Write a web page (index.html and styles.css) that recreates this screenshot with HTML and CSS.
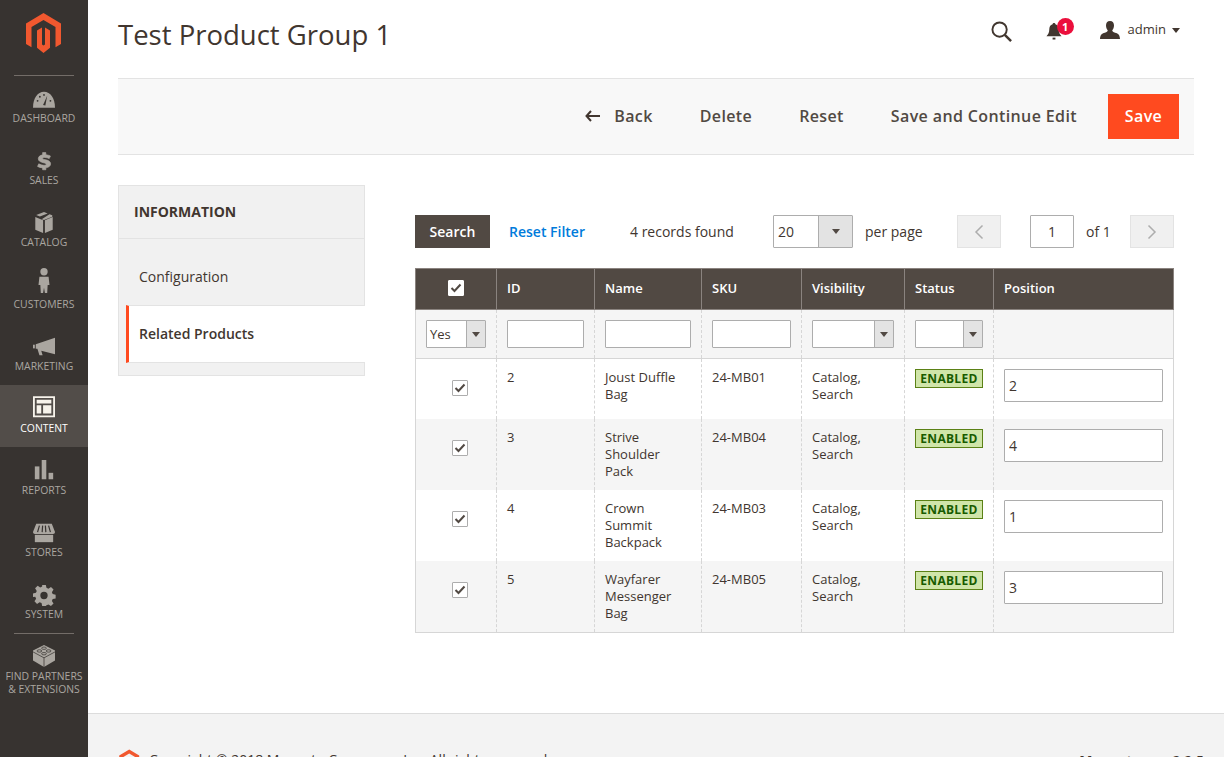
FILE: index.html
```html
<!DOCTYPE html>
<html lang="en">
<head>
    <meta charset="UTF-8">
    <meta name="viewport" content="width=device-width, initial-scale=1.0">
    <title>Test Product Group 1 / Admin</title>
    <link rel="stylesheet" href="styles.css">
</head>
<body>
<div class="page">

    <nav class="menu">
        <div class="menu-logo">
            <svg width="36" height="42" viewBox="27 11 36 42"><path fill="#f1582f" d="M44.5 12 62 22.500V43L56.500 46.300V26L44.500 19 32.500 26V46.300L27 43V22.500Z"/><path fill="#f1582f" d="M38 29.500 43 26.500V43.500L44.500 44.500 46 43.500V26.500L51 29.500V46.800L44.500 52 38 46.800Z"/></svg>
        </div>
        <ul class="menu-list">
            <li class="menu-item">
                <svg class="menu-icon" viewBox="0 0 24 24"><path d="M0 21.500C0 11 5 4 12 4s12 7 12 17.500Z"/><path fill="#373330" d="M11 18.500 15.500 8.500 13.500 19Z"/><g fill="#373330"><circle cx="5" cy="14" r="1"/><circle cx="7.500" cy="9.500" r="1"/><circle cx="12" cy="7.500" r="1"/><circle cx="19" cy="14" r="1"/></g></svg>
                <span>DASHBOARD</span>
            </li>
            <li class="menu-item">
                <svg class="menu-icon" viewBox="0 0 24 24"><path stroke="#aaa6a0" stroke-width=".8" transform="translate(0 2) scale(1 .85)" d="M10.500 1h3.500v2.800c2 .2 3.700.8 5 1.600l-1.300 3.300c-1.500-.9-3.200-1.500-5-1.500-1.500 0-2.200.5-2.200 1.200 0 .9 1.200 1.200 3.300 1.800 3.200.9 5.400 2.200 5.400 5.200 0 2.700-2 4.600-5.200 5.100V23h-3.500v-2.400c-2.200-.2-4.200-.9-5.500-1.900l1.300-3.300c1.600 1.100 3.600 1.900 5.600 1.900 1.700 0 2.500-.6 2.500-1.400 0-1-1.100-1.300-3.300-2-3-.9-5.300-2.100-5.300-5 0-2.600 1.900-4.500 4.700-5Z"/></svg>
                <span>SALES</span>
            </li>
            <li class="menu-item">
                <svg class="menu-icon" viewBox="0 0 24 24"><path d="M12 0l4 1.600-8.500 3.400-4-1.600ZM18 2.400l3 1.200v1.600L12 8.800 9.500 7.800ZM2.500 5.500l8.500 3.400V23l-8.500-3.600ZM21.500 5.500V19.400L13 23V8.900Z"/></svg>
                <span>CATALOG</span>
            </li>
            <li class="menu-item">
                <svg class="menu-icon" viewBox="0 0 24 24"><circle cx="12" cy="-2.500" r="4"/><path d="M7 3H17L18 12H16L15.500 20.700H13L12 15 11 20.700H8.500L8 12H6Z"/></svg>
                <span>CUSTOMERS</span>
            </li>
            <li class="menu-item">
                <svg class="menu-icon" viewBox="0 0 24 24"><path d="M24 2V20L9 16 10.500 21H7L4.800 14H3V9Z"/><rect x="0" y="9.500" width="2" height="4"/></svg>
                <span>MARKETING</span>
            </li>
            <li class="menu-item active">
                <svg class="menu-icon" viewBox="0 0 24 24"><path transform="translate(0 -2)" fill-rule="evenodd" d="M0 0H24V23H0ZM2 2V21H22V2ZM4 4H20V8H4ZM4 10H9V19H4ZM11 10H20V19H11Z"/></svg>
                <span>CONTENT</span>
            </li>
            <li class="menu-item">
                <svg class="menu-icon" viewBox="0 0 24 24"><g transform="translate(0 -2)"><rect x="2" y="9" width="5" height="14"/><rect x="9.500" y="2" width="5" height="21"/><rect x="17" y="16" width="5" height="7"/></g></svg>
                <span>REPORTS</span>
            </li>
            <li class="menu-item">
                <svg class="menu-icon" viewBox="0 0 24 24"><path d="M3.500 2H20.500L24 11c0 1.500-1 2-2 2H2c-1 0-2-.5-2-2Z"/><path d="M2 14H22V22H2Z"/><path stroke="#373330" stroke-width="1.300" d="M7 4 5 11M10.500 4 10 11M13.500 4 14 11M17 4 19 11"/></svg>
                <span>STORES</span>
            </li>
            <li class="menu-item">
                <svg class="menu-icon" viewBox="0 0 24 24"><path fill-rule="evenodd" d="M10 1h4l.7 3.200 2.100.9 2.800-1.800 2.800 2.800-1.800 2.800.9 2.100 3.200.7v4l-3.200.7-.9 2.100 1.800 2.800-2.800 2.800-2.800-1.800-2.100.9L14 24h-4l-.7-3.200-2.100-.9-2.800 1.800-2.800-2.800 1.800-2.800-.9-2.100L0 14.300v-4l3.200-.7.900-2.100L2.300 4.700 5.100 1.900l2.800 1.800 2.100-.9ZM12 8.500a4 4 0 1 0 0 8 4 4 0 0 0 0-8Z"/></svg>
                <span>SYSTEM</span>
            </li>
            <li class="menu-item partners">
                <svg class="menu-icon" viewBox="0 0 24 24"><path d="M12 0 24 6V17L12 24 0 17V6Z"/><g fill="none" stroke="#373330" stroke-width=".8"><path d="M0 7.500 12 14 24 7.500M12 14V24"/><ellipse cx="12" cy="3.500" rx="2.600" ry="1.300"/><ellipse cx="7" cy="6.500" rx="2.600" ry="1.300"/><ellipse cx="17" cy="6.500" rx="2.600" ry="1.300"/><ellipse cx="12" cy="9.500" rx="2.600" ry="1.300"/></g></svg>
                <span>FIND PARTNERS<br>&amp; EXTENSIONS</span>
            </li>
        </ul>
    </nav>

    <div class="main">
        <header class="top">
            <h1 class="page-title">Test Product Group 1</h1>
            <div class="top-tools">
                <svg class="tool-search" width="21" height="21" viewBox="0 0 22 22"><circle cx="9" cy="9" r="7.500" fill="none" stroke="#41362f" stroke-width="2"/><path d="M14.500 14.500 21 21" stroke="#41362f" stroke-width="2.600"/></svg>
                <div class="tool-bell">
                    <svg width="16" height="17" viewBox="0 0 16 18"><path fill="#41362f" d="M8 0c1 0 1.500.7 1.500 1.400C12 2 13 4.200 13 7c0 3 1 5 3 7H0c2-2 3-4 3-7 0-2.800 1-5 3.500-5.600C6.500.7 7 0 8 0Z"/><rect x="6.500" y="15.500" width="3" height="2" fill="#41362f"/></svg>
                    <span class="bell-count">1</span>
                </div>
                <div class="tool-user">
                    <svg width="20" height="18" viewBox="0 0 20 18"><path fill="#41362f" d="M10 0c2.800 0 4 2 4 4.500 0 2-1 4-1.800 5 .3 1.300 1.500 1.800 3.800 2.600 2.500.9 3.700 1.900 4 5.900H0c.3-4 1.500-5 4-5.900 2.300-.8 3.500-1.300 3.800-2.600C7 8.500 6 6.500 6 4.500 6 2 7.200 0 10 0Z"/></svg>
                    <span>admin</span>
                    <i class="caret"></i>
                </div>
            </div>
        </header>

        <div class="actions">
            <a class="action back"><svg width="15" height="12" viewBox="0 0 15 12"><path d="M6 1 1.500 6 6 11M2 6H15" fill="none" stroke="#41362f" stroke-width="2"/></svg>Back</a>
            <a class="action">Delete</a>
            <a class="action">Reset</a>
            <a class="action">Save and Continue Edit</a>
            <a class="action-save">Save</a>
        </div>

        <div class="columns">
            <aside class="side">
                <div class="side-title">INFORMATION</div>
                <a class="side-link">Configuration</a>
                <a class="side-link current">Related Products</a>
            </aside>

            <section class="grid">
                <div class="toolbar">
                    <a class="btn-search">Search</a>
                    <a class="reset-filter">Reset Filter</a>
                    <span class="records">4 records found</span>
                    <div class="select per-page"><span class="select-val">20</span><span class="select-arrow"></span></div>
                    <span class="per-label">per page</span>
                    <a class="pager prev"><svg width="10" height="16" viewBox="0 0 10 16"><path d="M8.500 1.500 2 8l6.500 6.500" fill="none" stroke="#adadad" stroke-width="1.500"/></svg></a>
                    <div class="page-num">1</div>
                    <span class="page-of">of 1</span>
                    <a class="pager next"><svg width="10" height="16" viewBox="0 0 10 16"><path d="M1.500 1.500 8 8l-6.500 6.500" fill="none" stroke="#adadad" stroke-width="1.500"/></svg></a>
                </div>

                <table class="data">
                    <colgroup>
                        <col class="c-check"><col class="c-id"><col class="c-name"><col class="c-sku"><col class="c-vis"><col class="c-status"><col class="c-pos">
                    </colgroup>
                    <thead>
                        <tr class="head">
                            <th class="center"><span class="check head-check"><svg width="12" height="10" viewBox="0 0 12 10"><path d="M1.500 5 4.500 8 10.500 1.500" fill="none" stroke="#514943" stroke-width="2"/></svg></span></th>
                            <th>ID</th><th>Name</th><th>SKU</th><th>Visibility</th><th>Status</th><th>Position</th>
                        </tr>
                        <tr class="filters">
                            <td><div class="select f-yes"><span class="select-val">Yes</span><span class="select-arrow"></span></div></td>
                            <td><input class="f-input" type="text"></td>
                            <td><input class="f-input" type="text"></td>
                            <td><input class="f-input" type="text"></td>
                            <td><div class="select f-vis"><span class="select-val"></span><span class="select-arrow"></span></div></td>
                            <td><div class="select f-status"><span class="select-val"></span><span class="select-arrow"></span></div></td>
                            <td></td>
                        </tr>
                    </thead>
                    <tbody>
                        <tr class="row-short">
                            <td class="center"><span class="check"><svg width="12" height="10" viewBox="0 0 12 10"><path d="M1.500 5 4.500 8 10.500 1.500" fill="none" stroke="#514943" stroke-width="2"/></svg></span></td>
                            <td>2</td><td>Joust Duffle Bag</td><td>24-MB01</td><td>Catalog, Search</td>
                            <td><span class="badge">ENABLED</span></td>
                            <td><input class="pos" type="text" value="2"></td>
                        </tr>
                        <tr class="odd">
                            <td class="center"><span class="check"><svg width="12" height="10" viewBox="0 0 12 10"><path d="M1.500 5 4.500 8 10.500 1.500" fill="none" stroke="#514943" stroke-width="2"/></svg></span></td>
                            <td>3</td><td>Strive Shoulder Pack</td><td>24-MB04</td><td>Catalog, Search</td>
                            <td><span class="badge">ENABLED</span></td>
                            <td><input class="pos" type="text" value="4"></td>
                        </tr>
                        <tr>
                            <td class="center"><span class="check"><svg width="12" height="10" viewBox="0 0 12 10"><path d="M1.500 5 4.500 8 10.500 1.500" fill="none" stroke="#514943" stroke-width="2"/></svg></span></td>
                            <td>4</td><td>Crown Summit Backpack</td><td>24-MB03</td><td>Catalog, Search</td>
                            <td><span class="badge">ENABLED</span></td>
                            <td><input class="pos" type="text" value="1"></td>
                        </tr>
                        <tr class="odd">
                            <td class="center"><span class="check"><svg width="12" height="10" viewBox="0 0 12 10"><path d="M1.500 5 4.500 8 10.500 1.500" fill="none" stroke="#514943" stroke-width="2"/></svg></span></td>
                            <td>5</td><td>Wayfarer Messenger Bag</td><td>24-MB05</td><td>Catalog, Search</td>
                            <td><span class="badge">ENABLED</span></td>
                            <td><input class="pos" type="text" value="3"></td>
                        </tr>
                    </tbody>
                </table>
            </section>
        </div>

        <footer class="foot">
            <div class="foot-left">
                <svg width="21" height="24" viewBox="27 11 36 42"><path fill="#f1582f" d="M44.5 12 62 22.500V43L56.500 46.300V26L44.500 19 32.500 26V46.300L27 43V22.500Z"/><path fill="#f1582f" d="M38 29.500 43 26.500V43.500L44.500 44.500 46 43.500V26.500L51 29.500V46.800L44.500 52 38 46.800Z"/></svg>
                <span>Copyright © 2018 Magento Commerce Inc. All rights reserved.</span>
            </div>
            <div class="foot-right"><b>Magento</b> ver. 2.2.5</div>
        </footer>
    </div>

</div>
</body>
</html>
```

FILE: styles.css
```css
* {
    box-sizing: border-box;
}

html, body {
    margin: 0;
    padding: 0;
    height: 100vh;
    overflow: hidden;
}

body {
    font-family: 'Open Sans', 'Liberation Sans', sans-serif;
    font-size: 14px;
    color: #41362f;
    background: #fff;
}

.page {
    position: relative;
    display: flex;
    height: 100vh;
}

/* left menu */
.menu {
    flex: 0 0 88px;
    background: #373330;
    display: flex;
    flex-direction: column;
    align-items: center;
}

.menu-logo {
    height: 76px;
    width: 60px;
    margin-bottom: -1px;
    border-bottom: 1px solid #736d68;
    padding-top: 12px;
    display: flex;
    justify-content: center;
    align-items: flex-start;
}

.menu-list {
    list-style: none;
    margin: 0;
    padding: 0;
    width: 88px;
}

.menu-item {
    height: 62px;
    padding-top: 13px;
    display: flex;
    flex-direction: column;
    align-items: center;
    font-size: 10.4px;
    line-height: 15px;
    color: #aaa6a0;
    text-align: center;
}

.menu-icon {
    width: 22px;
    height: 22px;
    fill: #aaa6a0;
    flex: none;
    overflow: visible;
}

.menu-item span {
    display: block;
    white-space: nowrap;
    margin-top: 1px;
}

.menu-item.active {
    background: #524d49;
    color: #fff;
}

.menu-item.active .menu-icon {
    fill: #f7f3eb;
}

.menu-item.partners {
    position: relative;
    height: auto;
    padding-top: 12px;
}

.menu-item.partners::before {
    content: "";
    position: absolute;
    top: 0;
    left: 14px;
    width: 60px;
    border-top: 1px solid #736d68;
}

.menu-item.partners span {
    line-height: 13px;
    margin-top: 3px;
}

/* main area */
.main {
    flex: 1;
    min-width: 0;
    display: flex;
    flex-direction: column;
}

.top {
    height: 78px;
    margin: 0 30px;
    display: flex;
    justify-content: space-between;
    padding-top: 15px;
}

.page-title {
    margin: 0;
    font-size: 27.5px;
    line-height: 40px;
    font-weight: 400;
    color: #41362f;
}

.top-tools {
    display: flex;
    align-items: flex-start;
    padding-top: 6px;
    margin-right: 14px;
}

.tool-search {
    margin: 0 34px 0 0;
}

.tool-bell {
    position: relative;
    width: 16px;
    margin-top: 2px;
    margin-right: 38px;
}

.bell-count {
    position: absolute;
    top: -5px;
    left: 11px;
    width: 17px;
    height: 17px;
    border-radius: 50%;
    background: #eb0f3c;
    color: #fff;
    font-size: 11px;
    font-weight: 700;
    line-height: 17px;
    text-align: center;
}

.tool-user {
    display: flex;
    align-items: center;
    font-size: 13px;
    line-height: 18px;
    height: 18px;
    color: #41362f;
}

.tool-user span {
    margin: -2px 6px 0 8px;
}

.caret {
    width: 0;
    height: 0;
    border: 4px solid transparent;
    border-top: 5px solid #41362f;
    border-bottom: 0;
}

.actions {
    height: 77px;
    margin: 0 30px;
    padding: 15px 15px 0 0;
    background: #f8f8f8;
    border-top: 1px solid #e3e3e3;
    border-bottom: 1px solid #e3e3e3;
    display: flex;
    justify-content: flex-end;
    align-items: flex-start;
}

.action {
    font-size: 16px;
    font-weight: 600;
    line-height: 45px;
    letter-spacing: .38px;
    color: #514943;
    margin-right: 47px;
    display: flex;
    align-items: center;
}

.action:nth-last-child(2) {
    margin-right: 31px;
}

.back svg {
    margin-right: 14px;
    margin-top: -2px;
}

.action-save {
    width: 71px;
    height: 45px;
    background: #ff4a1f;
    color: #fff;
    font-size: 16px;
    font-weight: 600;
    line-height: 45px;
    letter-spacing: .38px;
    text-align: center;
}

.columns {
    flex: 1;
    display: flex;
    margin: 30px 20px 0 30px;
}

/* side tabs */
.side {
    flex: 0 0 247px;
    height: 191px;
    background: #f1f1f1;
    border: 1px solid #e3e3e3;
}

.side-title {
    height: 53px;
    padding-left: 15px;
    font-size: 14px;
    font-weight: 700;
    line-height: 52px;
    border-bottom: 1px solid #e3e3e3;
    color: #41362f;
}

.side-link {
    display: block;
    height: 66px;
    padding-left: 20px;
    padding-top: 13px;
    line-height: 50px;
    color: #41362f;
}

.side-link.current {
    height: 58px;
    margin-left: 7px;
    margin-right: -1px;
    padding: 0 0 0 10px;
    line-height: 56px;
    font-weight: 600;
    background: #fff;
    border-left: 3px solid #ff4a1f;
    border-top: 1px solid #e3e3e3;
    border-bottom: 1px solid #e3e3e3;
}

/* grid */
.grid {
    width: 759px;
    margin-left: 50px;
    padding-top: 30px;
}

.toolbar {
    display: flex;
    align-items: center;
    height: 33px;
    margin-bottom: 20px;
}

.toolbar > * {
    flex: none;
}

.btn-search {
    width: 75px;
    height: 33px;
    background: #514943;
    color: #fff;
    font-weight: 600;
    line-height: 33px;
    text-align: center;
}

.reset-filter {
    width: 76px;
    margin-left: 19px;
    font-weight: 600;
    color: #007bdb;
    white-space: nowrap;
}

.records {
    margin-left: 45px;
    width: 143px;
}

.select {
    display: flex;
    height: 28px;
    background: #fff;
    border: 1px solid #adadad;
    border-radius: 1px;
}

.select-val {
    flex: 1;
    padding-left: 3px;
    line-height: 26px;
}

.select-arrow {
    position: relative;
    flex: 0 0 19px;
    background: #e3e3e3;
    border-left: 1px solid #adadad;
}

.select-arrow::after {
    content: "";
    position: absolute;
    top: 11px;
    left: 5px;
    border: 4px solid transparent;
    border-top: 5px solid #514943;
    border-bottom: 0;
}

.per-page {
    width: 80px;
    height: 33px;
}

.per-page .select-val {
    padding-left: 4px;
    line-height: 31px;
}

.per-page .select-arrow {
    flex-basis: 34px;
}

.per-page .select-arrow::after {
    top: 13px;
    left: 13px;
}

.per-label {
    margin-left: 12px;
    width: 92px;
}

.pager {
    width: 44px;
    height: 33px;
    background: #f0f0f0;
    border: 1px solid #e3e3e3;
    display: flex;
    align-items: center;
    justify-content: center;
}

.page-num {
    width: 44px;
    height: 33px;
    margin-left: 29px;
    border: 1px solid #adadad;
    border-radius: 1px;
    line-height: 31px;
    text-align: center;
}

.page-of {
    margin-left: 12px;
    width: 44px;
}

.data {
    width: 758px;
    border-collapse: collapse;
    table-layout: fixed;
    font-size: 13px;
    line-height: 17px;
    color: #41362f;
}

.c-check { width: 81px; }
.c-id { width: 98px; }
.c-name { width: 107px; }
.c-sku { width: 100px; }
.c-vis { width: 103px; }
.c-status { width: 89px; }
.c-pos { width: 180px; }

.data th {
    height: 41px;
    padding: 0 10px 2px;
    background: #514943;
    color: #fff;
    font-weight: 600;
    text-align: left;
    border: 1px solid #8a837f;
}

.data td {
    padding: 10px 10px 0;
    vertical-align: top;
    border-left: 1px dashed #d6d6d6;
    border-right: 1px dashed #d6d6d6;
    height: 71px;
}

.data tbody tr:last-child td {
    height: 72px;
    border-bottom: 1px solid #d6d6d6;
}

.data td:first-child {
    border-left: 1px solid #d6d6d6;
}

.data td:last-child {
    border-right: 1px solid #d6d6d6;
}

.data .row-short td {
    height: 60px;
}

.data .odd td {
    background: #f5f5f5;
}

.data th.center {
    text-align: center;
    padding: 0;
}

.data td.center {
    padding: 21px 0 0 36px;
}

.data .filters td {
    height: 49px;
    padding-top: 10px;
    background: #f5f5f5;
    border-bottom: 1px solid #d6d6d6;
}

.check {
    display: inline-flex;
    align-items: center;
    justify-content: center;
    width: 16px;
    height: 16px;
    background: #fff;
    border: 1px solid #adadad;
    border-radius: 1px;
    vertical-align: top;
}

.head-check {
    margin-top: -1px;
    border-color: #fff;
}

.f-input {
    display: block;
    width: 100%;
    height: 28px;
    border: 1px solid #adadad;
    border-radius: 1px;
    background: #fff;
}

.f-yes { width: 60px; }
.f-vis { width: 82px; }
.f-status { width: 68px; }

.badge {
    display: block;
    width: 68px;
    height: 19px;
    background: #d0e5a9;
    border: 1px solid #5b8116;
    color: #185b00;
    font-size: 12px;
    font-weight: 700;
    line-height: 17px;
    letter-spacing: .3px;
    text-align: center;
}

.pos {
    display: block;
    width: 159px;
    height: 33px;
    padding: 0 4px;
    border: 1px solid #adadad;
    border-radius: 1px;
    font-family: inherit;
    font-size: 14px;
    color: #41362f;
}

/* footer */
.foot {
    position: absolute;
    top: 713px;
    left: 88px;
    right: 0;
    height: 120px;
    padding: 35px 20px 0 31px;
    display: flex;
    justify-content: space-between;
    background: #f3f3f3;
    border-top: 1px solid #dcdcdc;
    font-size: 14px;
    color: #41362f;
}

.foot-left {
    display: flex;
    align-items: flex-start;
}

.foot-left span {
    margin-left: 9px;
    line-height: 18px;
    margin-top: 2px;
}

.foot-right {
    margin-top: 2px;
}
```
